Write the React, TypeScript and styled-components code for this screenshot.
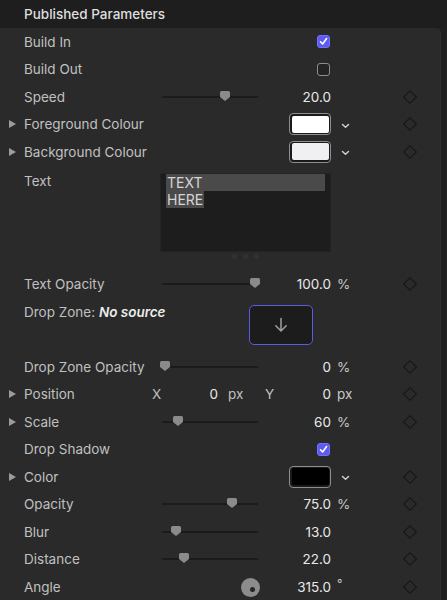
import styled, { createGlobalStyle } from "styled-components";

const GlobalStyle = createGlobalStyle`
	html, body {
		margin: 0;
		padding: 0;
		background: #1f1f1f;
		font-family: Inter, "Noto Sans", "Liberation Sans", sans-serif;
		-webkit-font-smoothing: antialiased;
	}
`;

const Page = styled.div`
	width: 447px;
	height: 600px;
	overflow: hidden;
	background: #1f1f1f;
`;

const Header = styled.div`
	height: 28px;
	display: flex;
	align-items: center;
	padding-left: 24px;
	color: #dedede;
	font-size: 13.5px;
	font-weight: 500;
	background: #1e1e1e;
`;

const Panel = styled.div`
	width: 441px;
	background: #2a2a2a;
	border-top-right-radius: 5px;
	border-right: 1px solid #2f2f2f;
	box-sizing: border-box;
	padding-bottom: 20px;
`;

const Row = styled.div<{ $h?: number; $align?: string }>`
	display: grid;
	grid-template-columns: 24px 136px 171px 67px 24px;
	height: ${(p) => p.$h ?? 27.5}px;
	align-items: ${(p) => p.$align ?? "center"};
	font-size: 13.5px;
	color: #c0c0c0;
`;

const Disclosure = styled.div`
	display: flex;
	align-items: center;
	padding-left: 9px;
`;

const Triangle = styled.span`
	width: 0;
	height: 0;
	border-top: 4.5px solid transparent;
	border-bottom: 4.5px solid transparent;
	border-left: 7px solid #9c9c9c;
`;

const Label = styled.div<{ $top?: number }>`
	white-space: nowrap;
	padding-top: ${(p) => p.$top ?? 0}px;
`;

const Source = styled.span`
	color: #ececec;
	font-style: italic;
	font-weight: 600;
`;

const Control = styled.div`
	display: flex;
	align-items: center;
	justify-content: flex-end;
	position: relative;
	height: 100%;
`;

const Value = styled.span`
	color: #e8e8e8;
	margin-left: auto;
`;

const Unit = styled.div`
	padding-left: 6px;
	color: #c8c8c8;
	display: flex;
	align-items: center;
`;

const Degree = styled.span`
	position: relative;
	top: -3px;
	font-size: 12px;
`;

const Track = styled.div`
	position: relative;
	width: 96px;
	height: 2px;
	margin-left: 2px;
	background: #1b1b1b;
`;

const Thumb = styled.svg`
	position: absolute;
	top: -5px;
	margin-left: -5px;
`;

const Slider = ({ pos, value }: { pos: number; value: string }) => (
	<Control>
		<Track>
			<Thumb style={{ left: pos }} width="10" height="10" viewBox="0 0 10 10">
				<path d="M1.5 0 H8.5 Q10 0 10 1.5 V6 L5 10 L0 6 V1.5 Q0 0 1.5 0Z" fill="#8b8b8b" />
			</Thumb>
		</Track>
		<Value>{value}</Value>
	</Control>
);

const Diamond = styled.div`
	width: 8px;
	height: 8px;
	border: 1px solid #141414;
	transform: rotate(45deg);
	justify-self: center;
`;

const Check = styled.div<{ $on?: boolean }>`
	width: 13px;
	height: 13px;
	margin-right: 1px;
	border-radius: 3px;
	box-sizing: border-box;
	border: 1px solid ${(p) => (p.$on ? "#7371ff" : "#8d8d8d")};
	background: ${(p) => (p.$on ? "#5d5bf2" : "#242424")};
	display: flex;
	align-items: center;
	justify-content: center;
`;

const Checkbox = ({ on }: { on?: boolean }) => (
	<Control>
		<Check $on={on}>
			{on && (
				<svg width="9" height="9" viewBox="0 0 9 9">
					<path d="M1.5 4.8 L3.6 7 L7.6 1.6" fill="none" stroke="#fff" strokeWidth="1.6" strokeLinecap="round" strokeLinejoin="round" />
				</svg>
			)}
		</Check>
	</Control>
);

const Well = styled.div<{ $color: string }>`
	width: 42px;
	height: 22px;
	box-sizing: border-box;
	border-radius: 4px;
	border: 1.5px solid #8e8e8e;
	padding: 1.5px;
	background: #1a1a1a;
	&::after {
		content: "";
		display: block;
		height: 100%;
		border-radius: 2px;
		background: ${(p) => p.$color};
	}
`;

const Chevron = () => (
	<svg width="9" height="6" viewBox="0 0 9 6" style={{ marginLeft: 4, marginTop: 3 }}>
		<path d="M1.5 1.5 L4.5 4.3 L7.5 1.5" fill="none" stroke="#cfcfcf" strokeWidth="1.5" strokeLinecap="round" strokeLinejoin="round" />
	</svg>
);

const TextBox = styled.div`
	margin-top: 7px;
	height: 79px;
	background: #1d1d1d;
	border: 1px solid #232323;
	box-sizing: border-box;
	padding-left: 5px;
	font-size: 14px;
	line-height: 17px;
	color: #d6d6d6;
`;

const Sel = styled.div<{ $w?: number }>`
	background: #4a4a4a;
	width: ${(p) => (p.$w ? `${p.$w}px` : "auto")};
	margin-right: 5px;
	padding-left: 1px;
`;

const Dots = styled.div`
	display: flex;
	justify-content: center;
	gap: 6px;
	margin-top: 2px;
	span {
		width: 5px;
		height: 5px;
		border-radius: 50%;
		background: #323232;
	}
`;

const DropWell = styled.div`
	margin-top: 7px;
	margin-left: 89px;
	width: 64px;
	height: 40px;
	box-sizing: border-box;
	border: 1.5px solid #5c5ae0;
	border-radius: 5px;
	background: #1c1c1c;
	display: flex;
	align-items: center;
	justify-content: center;
`;

const PosGroup = styled.div`
	display: grid;
	grid-template-columns: 10px 56px 47px 10px 1fr;
	margin-left: -8px;
	align-items: center;
	color: #c0c0c0;
	span.v {
		color: #e8e8e8;
		text-align: right;
	}
	span.px {
		padding-left: 10px;
	}
`;

const Dial = styled.div`
	width: 19px;
	height: 19px;
	border-radius: 50%;
	background: #8c8c8c;
	position: absolute;
	left: 81px;
	top: 5px;
	&::after {
		content: "";
		position: absolute;
		width: 5px;
		height: 5px;
		border-radius: 50%;
		background: #262626;
		left: 9px;
		top: 9px;
	}
`;

const Empty = () => <div />;

type SliderRow = { label: string; pos: number; value: string; unit?: string; tri?: boolean };

const SliderLine = ({ label, pos, value, unit, tri }: SliderRow) => (
	<Row>
		<Disclosure>{tri && <Triangle />}</Disclosure>
		<Label>{label}</Label>
		<Slider pos={pos} value={value} />
		<Unit>{unit}</Unit>
		<Diamond />
	</Row>
);

const ColorLine = ({ label, color }: { label: string; color: string }) => (
	<Row>
		<Disclosure><Triangle /></Disclosure>
		<Label>{label}</Label>
		<Control><Well $color={color} /></Control>
		<Unit><Chevron /></Unit>
		<Diamond />
	</Row>
);

export default function App() {
	return (
		<Page>
			<GlobalStyle />
			<Header>Published Parameters</Header>
			<Panel>
				<Row>
					<Empty />
					<Label>Build In</Label>
					<Checkbox on />
					<Empty />
					<Empty />
				</Row>
				<Row>
					<Empty />
					<Label>Build Out</Label>
					<Checkbox />
					<Empty />
					<Empty />
				</Row>
				<SliderLine label="Speed" pos={63} value="20.0" />
				<ColorLine label="Foreground Colour" color="#ffffff" />
				<ColorLine label="Background Colour" color="#f0f0f2" />
				<Row $h={104.5} $align="start">
					<Empty />
					<Label $top={7}>Text</Label>
					<div>
						<TextBox>
							<Sel>TEXT</Sel>
							<Sel $w={37}>HERE</Sel>
						</TextBox>
						<Dots><span /><span /><span /></Dots>
					</div>
					<Empty />
					<Empty />
				</Row>
				<SliderLine label="Text Opacity" pos={93} value="100.0" unit="%" />
				<Row $h={55.5} $align="start">
					<Empty />
					<Label $top={6}>
						Drop Zone: <Source>No source</Source>
					</Label>
					<div>
						<DropWell>
							<svg width="14" height="16" viewBox="0 0 14 16">
								<path d="M7 1.5 V14 M1.8 8.8 L7 14 L12.2 8.8" fill="none" stroke="#a0a0a0" strokeWidth="1.5" strokeLinecap="round" strokeLinejoin="round" />
							</svg>
						</DropWell>
					</div>
					<Empty />
					<Empty />
				</Row>
				<SliderLine label="Drop Zone Opacity" pos={3} value="0" unit="%" />
				<Row>
					<Disclosure><Triangle /></Disclosure>
					<Label>Position</Label>
					<PosGroup>
						<span>X</span>
						<span className="v">0</span>
						<span className="px">px</span>
						<span>Y</span>
						<span className="v">0</span>
					</PosGroup>
					<Unit>px</Unit>
					<Diamond />
				</Row>
				<SliderLine label="Scale" pos={16} value="60" unit="%" tri />
				<Row>
					<Empty />
					<Label>Drop Shadow</Label>
					<Checkbox on />
					<Empty />
					<Empty />
				</Row>
				<ColorLine label="Color" color="#000000" />
				<SliderLine label="Opacity" pos={70} value="75.0" unit="%" />
				<SliderLine label="Blur" pos={14} value="13.0" />
				<SliderLine label="Distance" pos={22} value="22.0" />
				<Row>
					<Empty />
					<Label>Angle</Label>
					<Control>
						<Dial />
						<Value>315.0</Value>
					</Control>
					<Unit><Degree>°</Degree></Unit>
					<Diamond />
				</Row>
			</Panel>
		</Page>
	);
}
